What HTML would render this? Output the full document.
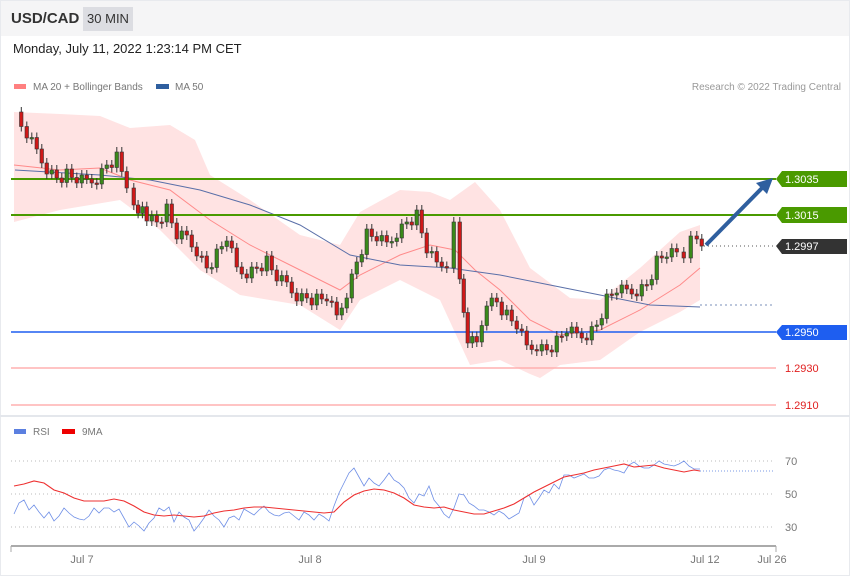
<!DOCTYPE html>
<html><head><meta charset="utf-8"><style>
body{margin:0;width:850px;height:576px;background:#fff;font-family:"Liberation Sans",sans-serif;overflow:hidden;position:relative}
.hdr{position:absolute;left:0;top:0;width:850px;height:36px;background:#f5f5f6}
.t{position:absolute;white-space:nowrap}
</style></head><body>
<div class="hdr"></div>
<div class="t" style="left:11px;top:10px;font-size:15px;font-weight:bold;color:#333">USD/CAD</div>
<div class="t" style="left:83px;top:7px;width:50px;height:24px;background:#dcdde2;font-size:13px;color:#333;line-height:24px;text-align:center">30 MIN</div>
<div class="t" style="left:13px;top:41px;font-size:13px;color:#222">Monday, July 11, 2022 1:23:14 PM CET</div>
<svg id="s" width="850" height="576" style="position:absolute;left:0;top:0" font-family="Liberation Sans, sans-serif">
<rect x="0.5" y="0.5" width="849" height="575" fill="none" stroke="#e8eaee"/>
<line x1="0" y1="416" x2="850" y2="416" stroke="#e4e7ec" stroke-width="2"/>
<rect x="14" y="84" width="12" height="5" fill="#ff8080"/><text x="33" y="90" font-size="10" fill="#777">MA 20 + Bollinger Bands</text>
<rect x="156" y="84" width="13" height="5" fill="#2f5f9f"/><text x="175" y="90" font-size="10" fill="#777">MA 50</text>
<text x="841" y="90" font-size="10" fill="#999" text-anchor="end">Research © 2022 Trading Central</text>
<polygon fill="#ffe3e3" points="14,112 60,114 100,116 130,128 170,125 195,140 210,175 250,200 300,235 340,245 360,212 400,190 430,192 450,200 475,182 500,210 530,268 570,298 600,300 640,268 680,232 700,225 700,300 680,312 640,332 600,360 560,365 540,378 530,374 500,360 470,365 440,300 400,280 360,300 340,330 300,305 240,295 200,270 160,230 120,200 60,210 14,222"/>
<polyline fill="none" stroke="#ff8a8a" stroke-width="1" points="14,165 60,170 100,168 130,180 170,190 210,220 250,245 300,270 340,290 360,275 400,255 430,245 455,250 475,270 500,290 530,320 560,335 600,330 640,310 680,285 700,268"/>
<polyline fill="none" stroke="#5a6fa8" stroke-width="1" points="15,170 100,175 150,180 200,190 250,205 300,225 350,255 400,265 450,268 500,275 550,285 600,295 650,305 700,307"/>
<line x1="700" y1="305" x2="775" y2="305" stroke="#7a8fb8" stroke-dasharray="2,3"/>
<line x1="11" y1="179" x2="776" y2="179" stroke="#4a9a00" stroke-width="2"/>
<line x1="11" y1="215" x2="776" y2="215" stroke="#4a9a00" stroke-width="2"/>
<line x1="11" y1="332" x2="776" y2="332" stroke="#1e5ef0" stroke-width="1.5"/>
<line x1="11" y1="368" x2="776" y2="368" stroke="#ffb0b0" stroke-width="1.5"/>
<line x1="11" y1="405" x2="776" y2="405" stroke="#ffb0b0" stroke-width="1.5"/>
<line x1="700" y1="246" x2="776" y2="246" stroke="#555" stroke-dasharray="1,3"/>
<g font-size="11" fill="#fff">
<polygon points="776,179 782,171 847,171 847,187 782,187" fill="#4a9a00"/><text x="785" y="183">1.3035</text>
<polygon points="776,215 782,207 847,207 847,223 782,223" fill="#4a9a00"/><text x="785" y="219">1.3015</text>
<polygon points="776,246 782,239 847,239 847,254 782,254" fill="#333"/><text x="785" y="250">1.2997</text>
<polygon points="776,332 782,325 847,325 847,340 782,340" fill="#1e5ef0"/><text x="785" y="336">1.2950</text>
<text x="785" y="372" fill="#e02020">1.2930</text><text x="785" y="409" fill="#e02020">1.2910</text>
</g>
<g id="c"></g>
<line x1="706" y1="245" x2="762" y2="188" stroke="#2f5f9f" stroke-width="4"/>
<polygon points="773,178 756,183 767,194" fill="#2f5f9f"/>
<rect x="14" y="429" width="12" height="5" fill="#5b7fe0"/><text x="33" y="435" font-size="10" fill="#777">RSI</text>
<rect x="62" y="429" width="13" height="5" fill="#e00"/><text x="82" y="435" font-size="10" fill="#777">9MA</text>
<g stroke="#bbb" stroke-dasharray="1,3"><line x1="11" y1="461" x2="775" y2="461"/><line x1="11" y1="494" x2="775" y2="494"/><line x1="11" y1="527" x2="775" y2="527"/></g>
<g font-size="11" fill="#777"><text x="785" y="465">70</text><text x="785" y="498">50</text><text x="785" y="531">30</text></g>
<polyline fill="none" stroke="#6f8fe6" stroke-width="0.8" points="14,514 19,503 24,500 29,510 34,505 39,512 44,518 49,512 54,521 59,516 64,508 69,513 74,517 79,519 84,520 89,516 94,508 99,513 104,508 109,508 114,512 119,509 124,518 129,527 134,522 139,526 144,531 149,523 154,518 159,508 164,511 169,507 174,522 179,512 184,517 189,520 194,531 199,525 204,518 209,510 214,516 219,520 224,527 229,518 234,516 239,520 244,509 249,512 254,515 259,510 264,506 269,512 274,515 279,516 284,513 289,512 294,516 299,520 304,512 309,515 314,520 319,514 324,517 329,521 334,506 339,493 344,483 349,473 354,468 359,477 364,486 369,478 374,483 379,486 384,480 389,473 394,480 399,483 404,488 409,498 414,503 419,494 424,496 429,486 434,500 439,506 444,514 449,518 454,508 459,494 464,495 469,503 474,506 479,510 484,510 489,512 494,515 499,511 504,514 509,519 514,516 519,513 524,498 529,495 534,505 539,498 544,490 549,493 554,484 559,489 564,475 569,475 574,478 579,476 584,474 589,478 594,478 599,476 604,470 609,468 614,470 619,471 624,473 629,465 634,462 639,466 644,468 649,468 654,465 659,461 664,464 669,465 674,466 679,464 684,461 689,466 694,469 700,469"/>
<polyline fill="none" stroke="#ee3030" stroke-width="1.1" points="14,486 24,484 34,481 44,483 54,490 64,493 74,498 84,501 94,501 104,501 114,499 124,501 134,506 144,512 154,515 164,516 174,515 184,516 194,517 204,516 214,513 224,511 234,510 244,508 254,507 264,507 274,508 284,509 294,510 304,511 314,512 324,513 334,512 344,502 354,495 364,491 374,489 384,490 394,493 404,498 414,505 424,507 434,508 444,507 454,510 464,512 474,514 484,514 494,511 504,508 514,504 524,498 534,492 544,487 554,482 564,477 574,475 584,473 594,470 604,468 614,466 624,464 634,467 644,466 654,465 664,468 674,470 684,472 694,470 700,471"/>
<line x1="700" y1="471" x2="775" y2="471" stroke="#7a9ae6" stroke-dasharray="1,2"/>
<line x1="11" y1="546" x2="776" y2="546" stroke="#aaa" stroke-width="2"/>
<line x1="11" y1="546" x2="11" y2="552" stroke="#aaa"/><line x1="776" y1="546" x2="776" y2="552" stroke="#aaa"/>
<g font-size="11" fill="#777" text-anchor="middle"><text x="82" y="563">Jul 7</text><text x="310" y="563">Jul 8</text><text x="534" y="563">Jul 9</text><text x="705" y="563">Jul 12</text><text x="772" y="563">Jul 26</text></g>
</svg>
<script>
(function(){
var p=[[14,118],[25,135],[35,152],[45,168],[55,178],[65,175],[75,180],[85,182],[95,178],[105,165],[115,158],[125,185],[132,208],[145,215],[155,222],[165,210],[175,236],[185,238],[195,250],[205,268],[215,255],[225,238],[235,270],[245,272],[255,268],[265,262],[275,278],[285,285],[295,295],[305,298],[315,300],[325,298],[335,318],[345,292],[355,262],[365,235],[375,238],[385,245],[395,232],[405,222],[415,216],[425,250],[435,265],[445,262],[452,222],[458,285],[466,340],[475,345],[485,300],[495,302],[505,316],[515,326],[525,348],[535,345],[545,350],[555,342],[565,330],[575,336],[585,334],[595,325],[605,300],[615,290],[625,292],[635,290],[645,285],[655,262],[665,254],[675,255],[682,252],[689,236],[695,245],[700,246]];
var NS="http://www.w3.org/2000/svg",g=document.getElementById('c'),N=[];
for(var i=0;i<p.length-1;i++){var a=p[i],b=p[i+1];var n=Math.max(1,Math.round((b[0]-a[0])/4.8));for(var k=0;k<n;k++){var t=k/n;N.push([a[0]+(b[0]-a[0])*t,a[1]+(b[1]-a[1])*t+((k*7+i*3)%5-2)*3]);}}
N.push([700,246]);
function el(tag,at){var e=document.createElementNS(NS,tag);for(var key in at)e.setAttribute(key,String(at[key]));g.appendChild(e);}
for(var j=1;j<N.length;j++){var x=N[j][0],o=N[j-1][1],c=N[j][1];var hi=Math.min(o,c),lo=Math.max(o,c);if(lo-hi<1.5)lo=hi+1.5;var col=c<o?'#3a8a1a':'#d01818';
el('line',{x1:(x+1.75).toFixed(1),y1:(hi-5).toFixed(1),x2:(x+1.75).toFixed(1),y2:(lo+5).toFixed(1),stroke:'#333','stroke-width':1});
el('rect',{x:x.toFixed(1),y:hi.toFixed(1),width:3.5,height:(lo-hi).toFixed(1),fill:col,stroke:'#333','stroke-width':0.6});}
})();
</script>
</body></html>
